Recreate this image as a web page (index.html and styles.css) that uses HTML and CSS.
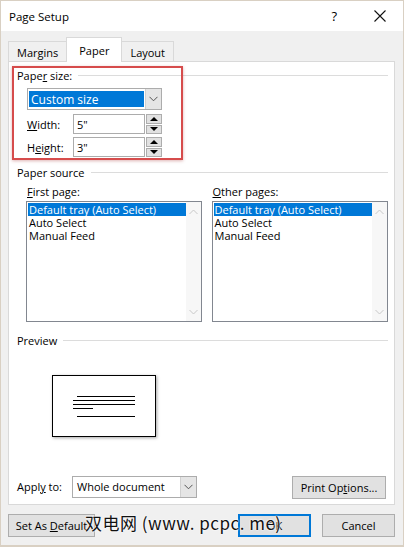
FILE: index.html
```html
<!DOCTYPE html>
<html lang="en">
<head>
  <meta charset="UTF-8" />
  <title>Page Setup</title>
  <link rel="stylesheet" href="styles.css">
</head>
<body>
<div class="window">

  <div class="titlebar">
    <span class="title">Page Setup</span>
    <span class="help">?</span>
    <svg class="close" width="12" height="12" viewBox="0 0 12 12"><path d="M0.5 0.5L11.5 11.5M11.5 0.5L0.5 11.5" stroke="#111" stroke-width="1.1"/></svg>
  </div>

  <div class="tabs">
    <div class="tab">Margins</div>
    <div class="tab active">Paper</div>
    <div class="tab">Layout</div>
  </div>

  <div class="panel">
    <div class="highlight"></div>

    <div class="group-head"><span>Pape<u>r</u> size:</span><span class="rule"></span></div>
    <div class="combo size-combo">
      <span class="combo-value selected">Custom size</span>
      <span class="combo-arrow"><svg width="9" height="6" viewBox="0 0 9 6"><path d="M0.5 0.8L4.5 4.8L8.5 0.8" fill="none" stroke="#555"/></svg></span>
    </div>
    <div class="dim-row">
      <span class="dim-label"><u>W</u>idth:</span>
      <span class="spin-input">5"</span>
      <span class="spinner"><span class="up"></span><span class="down"></span></span>
    </div>
    <div class="dim-row">
      <span class="dim-label">H<u>e</u>ight:</span>
      <span class="spin-input">3"</span>
      <span class="spinner"><span class="up"></span><span class="down"></span></span>
    </div>

    <div class="group-head source-head"><span>Paper source</span><span class="rule"></span></div>
    <div class="columns">
      <div class="col">
        <div class="col-label"><u>F</u>irst page:</div>
        <div class="listbox">
          <div class="items">
            <div class="item selected">Default tray (Auto Select)</div>
            <div class="item">Auto Select</div>
            <div class="item">Manual Feed</div>
          </div>
          <div class="scrollbar">
            <svg width="9" height="6" viewBox="0 0 9 6"><path d="M0.5 5L4.5 1L8.5 5" fill="none" stroke="#c8c8c8"/></svg>
            <svg width="9" height="6" viewBox="0 0 9 6"><path d="M0.5 1L4.5 5L8.5 1" fill="none" stroke="#c8c8c8"/></svg>
          </div>
        </div>
      </div>
      <div class="col right">
        <div class="col-label"><u>O</u>ther pages:</div>
        <div class="listbox">
          <div class="items">
            <div class="item selected">Default tray (Auto Select)</div>
            <div class="item">Auto Select</div>
            <div class="item">Manual Feed</div>
          </div>
          <div class="scrollbar">
            <svg width="9" height="6" viewBox="0 0 9 6"><path d="M0.5 5L4.5 1L8.5 5" fill="none" stroke="#c8c8c8"/></svg>
            <svg width="9" height="6" viewBox="0 0 9 6"><path d="M0.5 1L4.5 5L8.5 1" fill="none" stroke="#c8c8c8"/></svg>
          </div>
        </div>
      </div>
    </div>

    <div class="group-head preview-head"><span>Preview</span><span class="rule"></span></div>
    <div class="page">
      <span class="pline indent"></span>
      <span class="pline"></span>
      <span class="pline"></span>
      <span class="pline short"></span>
      <span class="pline indent last"></span>
    </div>

    <div class="apply-row">
      <span class="apply-label">Appl<u>y</u> to:</span>
      <div class="combo apply-combo">
        <span class="combo-value">Whole document</span>
        <span class="combo-arrow"><svg width="9" height="6" viewBox="0 0 9 6"><path d="M0.5 0.8L4.5 4.8L8.5 0.8" fill="none" stroke="#555"/></svg></span>
      </div>
      <button class="btn print-btn">Print Op<u>t</u>ions...</button>
    </div>
  </div>

  <div class="footer">
    <button class="btn default-btn">Set As <u>D</u>efault</button>
    <span class="spacer"></span>
    <button class="btn ok-btn">OK</button>
    <button class="btn cancel-btn">Cancel</button>
    <div class="watermark">双电网 (www. pcpc. me)</div>
  </div>

</div>
</body>
</html>
```

FILE: styles.css
```css
body {
  margin: 0;
  font-family: "Open Sans", "Noto Sans", sans-serif;
  font-size: 11px;
  color: #000;
}
u {
  text-decoration: underline;
  text-underline-offset: 1px;
}
.window {
  width: 404px;
  height: 547px;
  box-sizing: border-box;
  border: 1px solid #d9d0c3;
  border-bottom-width: 2px;
  background: #f0f0f0;
  position: relative;
}
.titlebar {
  height: 30px;
  background: #fff;
  display: flex;
  align-items: center;
  padding-left: 8px;
}
.title {
  font-size: 11.5px;
  flex: 1;
}
.help {
  font-size: 13px;
  margin-right: 37px;
}
.close {
  margin-right: 17px;
}

.tabs {
  display: flex;
  padding: 7px 0 0 7px;
  height: 24px;
  align-items: flex-end;
}
.tab {
  height: 21px;
  box-sizing: border-box;
  border: 1px solid #d9d9d9;
  border-bottom: none;
  padding: 0 8px;
  display: flex;
  align-items: center;
  background: #f0f0f0;
}
.tab.active {
  height: 25px;
  background: #fff;
  padding: 0 12px;
  margin: 0 -1px;
  position: relative;
  z-index: 1;
  border-color: #d9d9d9;
}

.panel {
  margin: -1px 8px 0 7px;
  height: 444px;
  box-sizing: border-box;
  background: #fff;
  border: 1px solid #d9d9d9;
  padding: 0 6px 0 8px;
  position: relative;
}
.highlight {
  position: absolute;
  left: 3px;
  top: 4px;
  width: 167px;
  height: 90px;
  border: 2px solid #d64c4c;
  box-shadow: 0 1px 3px rgba(160, 40, 40, 0.35);
  pointer-events: none;
}
.group-head {
  display: flex;
  align-items: center;
  height: 16px;
  margin-top: 5px;
  color: #000;
}
.rule {
  flex: 1;
  height: 1px;
  background: #dcdcdc;
  margin-left: 6px;
}
.source-head { margin-top: 7px; }
.preview-head { margin-top: 10px; }

.combo {
  display: flex;
  height: 22px;
  box-sizing: border-box;
  border: 1px solid #acacac;
  background: #fff;
}
.combo-value {
  flex: 1;
  display: flex;
  align-items: center;
  padding-left: 4px;
}
.combo-value.selected {
  background: #0078d7;
  color: #fff;
  margin: 2px 1px 2px 1px;
  padding-left: 2px;
  font-size: 12px;
}
.combo-arrow {
  width: 15px;
  background: #e5e5e5;
  border-left: 1px solid #d0d0d0;
  display: flex;
  align-items: center;
  justify-content: center;
}
.size-combo {
  width: 135px;
  margin: 5px 0 0 10px;
}

.dim-row {
  display: flex;
  align-items: center;
  height: 20px;
  margin: 4px 0 0 10px;
}
.dim-row + .dim-row { margin-top: 3px; }
.dim-label {
  width: 46px;
}
.spin-input {
  width: 72px;
  height: 20px;
  box-sizing: border-box;
  border: 1px solid #acacac;
  display: flex;
  align-items: center;
  padding-left: 3px;
}
.spinner {
  width: 16px;
  height: 20px;
  display: flex;
  flex-direction: column;
  gap: 1px;
  margin-left: 1px;
}
.spinner span {
  flex: 1;
  background: #e1e1e1;
  border: 1px solid #adadad;
  display: flex;
  align-items: center;
  justify-content: center;
}
.spinner .up::before {
  content: "";
  border-left: 4px solid transparent;
  border-right: 4px solid transparent;
  border-bottom: 4px solid #000;
}
.spinner .down::before {
  content: "";
  border-left: 4px solid transparent;
  border-right: 4px solid transparent;
  border-top: 4px solid #000;
}

.columns {
  display: flex;
  gap: 10px;
  margin-left: 9px;
}
.col {
  width: 176px;
}
.col.right {
  width: 177px;
}
.col-label {
  height: 16px;
  line-height: 16px;
  margin: 4px 0 1px 1px;
}
.listbox {
  height: 121px;
  box-sizing: border-box;
  border: 1px solid #828790;
  display: flex;
}
.items {
  flex: 1;
  padding: 1px 0 0 1px;
}
.item {
  height: 13px;
  line-height: 13px;
  padding-left: 1px;
  font-size: 11px;
}
.item.selected {
  background: #0078d7;
  color: #fff;
}
.scrollbar {
  width: 15px;
  background: #f7f7f7;
  display: flex;
  flex-direction: column;
  justify-content: space-between;
  align-items: center;
  padding: 7px 0 6px;
}

.page {
  width: 104px;
  height: 62px;
  box-sizing: border-box;
  border: 1px solid #000;
  margin: 27px 0 0 35px;
  box-shadow: 1px 1px 3px rgba(0, 0, 0, 0.35);
  padding: 20px 20px 0 20px;
  display: flex;
  flex-direction: column;
  gap: 3px;
}
.pline {
  display: block;
  height: 1px;
  background: #000;
}
.pline.indent {
  margin-left: 4px;
}
.pline.short {
  width: 20px;
}
.pline.last {
  margin-top: 4px;
}

.apply-row {
  display: flex;
  align-items: center;
  margin-top: 37px;
  padding-right: 2px;
}
.apply-label {
  width: 55px;
}
.apply-combo {
  width: 125px;
}
.btn {
  font-family: inherit;
  font-size: 11px;
  color: #000;
  background: #e1e1e1;
  border: 1px solid #adadad;
  height: 23px;
  padding: 0;
  box-sizing: border-box;
}
.print-btn {
  margin-left: auto;
  width: 94px;
  margin-top: 2px;
}

.footer {
  display: flex;
  align-items: center;
  padding: 9px 8px 0 7px;
  position: relative;
}
.spacer { flex: 1; }
.default-btn { width: 87px; }
.ok-btn {
  width: 73px;
  border: 2px solid #0078d7;
  margin-right: 11px;
}
.cancel-btn { width: 73px; }
.watermark {
  position: absolute;
  left: 84px;
  top: 5px;
  font-family: "Noto Sans CJK SC", "Noto Sans", sans-serif;
  font-size: 17px;
  color: #111;
  letter-spacing: 0.5px;
  text-shadow: 0 0 2px #fff, 0 0 2px #fff;
}
```
